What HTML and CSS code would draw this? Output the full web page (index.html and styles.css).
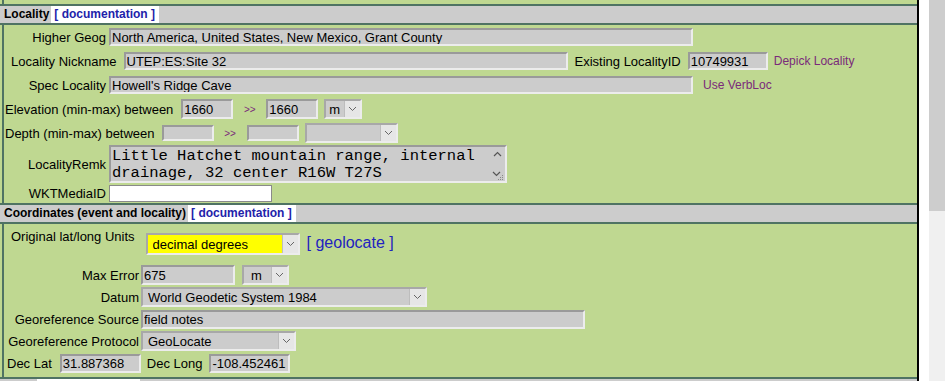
FILE: index.html
```html
<!DOCTYPE html>
<html lang="en">
<head>
    <meta charset="UTF-8">
    <title>Edit Locality</title>
    <link rel="stylesheet" href="styles.css">
</head>
<body>
<div class="page">
    <div class="main">
        <div class="sect-body sect-cut"></div>

        <div class="sect-head"><b>Locality</b><a class="doc" href="#">[ documentation ]</a></div>
        <div class="sect-body loc">
            <div class="row">
                <label class="lbl">Higher Geog</label>
                <input class="fld geog" value="North America, United States, New Mexico, Grant County">
            </div>
            <div class="row">
                <label class="lbl-nick">Locality Nickname</label>
                <input class="fld nick" value="UTEP:ES:Site 32">
                <label class="lbl-ex">Existing LocalityID</label>
                <input class="fld locid" value="10749931">
                <a class="act depick" href="#">Depick Locality</a>
            </div>
            <div class="row">
                <label class="lbl">Spec Locality</label>
                <input class="fld geog" value="Howell's Ridge Cave">
                <a class="act verb" href="#">Use VerbLoc</a>
            </div>
            <div class="row">
                <label class="lbl-range">Elevation (min-max) between</label>
                <input class="fld rng elev-min" value="1660">
                <span class="to">&gt;&gt;</span>
                <input class="fld rng" value="1660">
                <span class="sel unit-e"><select><option>m</option></select><span class="arr"><svg width="9" height="6" viewBox="0 0 9 6"><polyline points="1,1 4.5,4.5 8,1" fill="none" stroke="#666" stroke-width="1"/></svg></span></span>
            </div>
            <div class="row">
                <label class="lbl-range">Depth (min-max) between</label>
                <input class="fld rng dep-min" value="">
                <span class="to">&gt;&gt;</span>
                <input class="fld rng dep-max" value="">
                <span class="sel unit-d"><select><option></option></select><span class="arr"><svg width="9" height="6" viewBox="0 0 9 6"><polyline points="1,1 4.5,4.5 8,1" fill="none" stroke="#666" stroke-width="1"/></svg></span></span>
            </div>
            <div class="row row-ta">
                <label class="lbl">LocalityRemk</label>
                <span class="ta">
                    <textarea rows="2">Little Hatchet mountain range, internal drainage, 32 center R16W T27S</textarea>
                    <span class="tabar">
                        <svg width="9" height="6" viewBox="0 0 9 6"><polyline points="1,5 4.5,1.5 8,5" fill="none" stroke="#555" stroke-width="1.2"/></svg>
                        <svg width="11" height="9" viewBox="0 0 11 9"><polyline points="1,1 4.5,4.5 8,1" fill="none" stroke="#555" stroke-width="1.2"/><rect x="8" y="6" width="1" height="1" fill="#888"/><rect x="6" y="8" width="1" height="1" fill="#888"/><rect x="8" y="8" width="1" height="1" fill="#888"/><rect x="10" y="4" width="1" height="1" fill="#888"/><rect x="10" y="6" width="1" height="1" fill="#888"/><rect x="10" y="8" width="1" height="1" fill="#888"/></svg>
                    </span>
                </span>
            </div>
            <div class="row row-wkt">
                <label class="lbl">WKTMediaID</label>
                <input class="wkt" value="">
            </div>
        </div>

        <div class="sect-head"><b>Coordinates (event and locality)</b><a class="doc" href="#">[ documentation ]</a></div>
        <div class="sect-body coord">
            <div class="row row-units">
                <label class="lbl-units">Original lat/long Units</label>
                <span class="sel units"><select><option>decimal degrees</option></select><span class="arr"><svg width="9" height="6" viewBox="0 0 9 6"><polyline points="1,1 4.5,4.5 8,1" fill="none" stroke="#666" stroke-width="1"/></svg></span></span>
                <a class="geoloc" href="#">[ geolocate ]</a>
            </div>
            <div class="row row-c">
                <label class="lbl2">Max Error</label>
                <input class="fld maxerr" value="675">
                <span class="sel unit-m"><select><option>m</option></select><span class="arr"><svg width="9" height="6" viewBox="0 0 9 6"><polyline points="1,1 4.5,4.5 8,1" fill="none" stroke="#666" stroke-width="1"/></svg></span></span>
            </div>
            <div class="row row-c">
                <label class="lbl2">Datum</label>
                <span class="sel datum"><select><option>World Geodetic System 1984</option></select><span class="arr"><svg width="9" height="6" viewBox="0 0 9 6"><polyline points="1,1 4.5,4.5 8,1" fill="none" stroke="#666" stroke-width="1"/></svg></span></span>
            </div>
            <div class="row row-c">
                <label class="lbl2">Georeference Source</label>
                <input class="fld source" value="field notes">
            </div>
            <div class="row row-c">
                <label class="lbl2">Georeference Protocol</label>
                <span class="sel proto"><select><option>GeoLocate</option></select><span class="arr"><svg width="9" height="6" viewBox="0 0 9 6"><polyline points="1,1 4.5,4.5 8,1" fill="none" stroke="#666" stroke-width="1"/></svg></span></span>
            </div>
            <div class="row row-c">
                <label class="lbl-lat">Dec Lat</label>
                <input class="fld dec" value="31.887368">
                <label class="lbl-long">Dec Long</label>
                <input class="fld dec" value="-108.452461">
            </div>
        </div>

        <!-- next section, only its top edge is in view -->
        <div class="sect-head"><span class="head-stub"></span><span class="doc doc-stub"></span></div>
    </div>
    <div class="gap"></div>
    <div class="scroll"><div class="thumb"></div></div>
</div>
</body>
</html>
```

FILE: styles.css
```css
body {
    margin: 0;
    font-family: "Liberation Sans", Arial, sans-serif;
    font-size: 13px;
    background: #fff;
}

.page {
    display: flex;
    height: 381px;
    overflow: hidden;
}

.main {
    width: 917px;
    flex: none;
    background: #bfd891;
    border-right: 2px solid #000;
}

.gap {
    width: 10px;
    background: #fff;
}

.scroll {
    width: 16px;
    background: #f0f0f0;
}

.thumb {
    height: 211px;
    background: #cdcdcd;
}

/* section header bar */
.sect-head {
    display: flex;
    height: 17px;
    padding-left: 4px;
    background: #cccccc;
    border-top: 2px solid #4f7363;
    border-bottom: 2px solid #4f7363;
    font-size: 12px;
    line-height: 17px;
}

.sect-head b {
    margin-right: 2px;
}

.doc {
    background: #fff;
    color: #2222aa;
    font-weight: bold;
    text-decoration: none;
    padding: 0 4px 0 3px;
}

.head-stub {
    width: 33px;
}

.doc-stub {
    width: 103px;
    padding: 0;
}

.sect-body {
    margin-left: 2px;
    border-left: 2px solid #4f7363;
}

.sect-cut {
    height: 4px;
}

.loc {
    height: 178px;
}

.coord {
    height: 153px;
}

.row {
    display: flex;
    align-items: center;
    height: 24px;
    white-space: nowrap;
}

/* inputs */
.fld {
    box-sizing: border-box;
    height: 18px;
    margin: 0;
    padding: 0 1px;
    border: 2px solid;
    border-color: #9a9a9a #ececec #ececec #9a9a9a;
    background: #cccccc;
    color: #000;
    font: 13px "Liberation Sans", Arial, sans-serif;
    outline: none;
}

.sel {
    display: inline-flex;
    box-sizing: border-box;
    height: 20px;
    border: 2px solid;
    border-color: #a8a8a8 #ececec #ececec #a8a8a8;
    background: #cccccc;
}

.sel select {
    -webkit-appearance: none;
    appearance: none;
    flex: 1;
    min-width: 0;
    margin: 0;
    padding: 0 5px;
    border: 0;
    background: transparent;
    color: #000;
    font: 13px "Liberation Sans", Arial, sans-serif;
    outline: none;
}

.sel .arr {
    display: flex;
    align-items: center;
    justify-content: center;
    width: 15px;
    background: #e6e6e6;
    border-left: 1px solid #bdbdbd;
}

.act {
    color: #7a2a7a;
    font-size: 12px;
    text-decoration: none;
}

/* locality rows */
.lbl {
    width: 100px;
    margin-left: 2px;
    margin-right: 3px;
    text-align: right;
}

.geog {
    width: 584px;
}

.lbl-nick {
    margin-left: 7px;
    margin-right: 7px;
}

.nick {
    width: 444px;
}

.lbl-ex {
    margin-left: 7px;
    margin-right: 7px;
}

.locid {
    width: 80px;
}

.depick {
    margin-left: 6px;
}

.verb {
    margin-left: 10px;
}

.lbl-range {
    margin-left: 1px;
}

.rng {
    width: 52px;
    height: 20px;
}

.elev-min {
    margin-left: 8px;
}

.dep-min,
.dep-max {
    height: 16px;
}

.dep-min {
    margin-left: 7px;
}

.to {
    width: 33px;
    text-align: center;
    color: #7a2a7a;
    font-size: 10px;
}

.unit-e {
    width: 38px;
    margin-left: 6px;
}

.unit-e select {
    padding: 0 1px 0 3px;
}

.unit-d {
    width: 93px;
    margin-left: 6px;
}

.row-ta {
    height: 38px;
}

.ta {
    display: inline-flex;
    box-sizing: border-box;
    width: 398px;
    height: 38px;
    border: 2px solid;
    border-color: #9a9a9a #ececec #ececec #9a9a9a;
    background: #cccccc;
}

.ta textarea {
    flex: 1;
    margin: 0;
    padding: 1px 0 0 1px;
    border: 0;
    background: transparent;
    resize: none;
    overflow: hidden;
    color: #000;
    font: 15.5px/17px "Liberation Mono", "Courier New", monospace;
    outline: none;
}

.tabar {
    display: flex;
    flex-direction: column;
    justify-content: space-between;
    align-items: center;
    width: 16px;
    padding: 4px 0 1px;
}

.row-wkt {
    height: 20px;
}

.wkt {
    box-sizing: border-box;
    width: 163px;
    height: 17px;
    margin: 0;
    border: 1px solid #8a8a8a;
    background: #fff;
}

/* coordinates rows */
.row-units {
    height: 40px;
    align-items: flex-start;
    padding-top: 5px;
    box-sizing: border-box;
}

.lbl-units {
    margin-left: 7px;
    line-height: 16px;
}

.units {
    width: 154px;
    height: 22px;
    margin-top: 4px;
    margin-left: 11px;
    background: #ffff00;
}

.geoloc {
    margin-top: 5px;
    margin-left: 7px;
    color: #2222c0;
    font-size: 16px;
    line-height: 18px;
    text-decoration: none;
}

.row-c {
    height: 22px;
}

.lbl2 {
    width: 133px;
    margin-left: 2px;
    margin-right: 2px;
    text-align: right;
}

.maxerr {
    width: 94px;
    height: 20px;
}

.unit-m {
    width: 47px;
    margin-left: 7px;
}

.unit-m select {
    padding: 0 2px 0 7px;
}

.datum {
    width: 286px;
}

.source {
    width: 444px;
    height: 19px;
}

.proto {
    width: 155px;
}

.lbl-lat {
    margin-left: 3px;
    margin-right: 8px;
}

.lbl-long {
    margin-left: 6px;
    margin-right: 7px;
}

.dec {
    width: 81px;
    height: 19px;
}
```
